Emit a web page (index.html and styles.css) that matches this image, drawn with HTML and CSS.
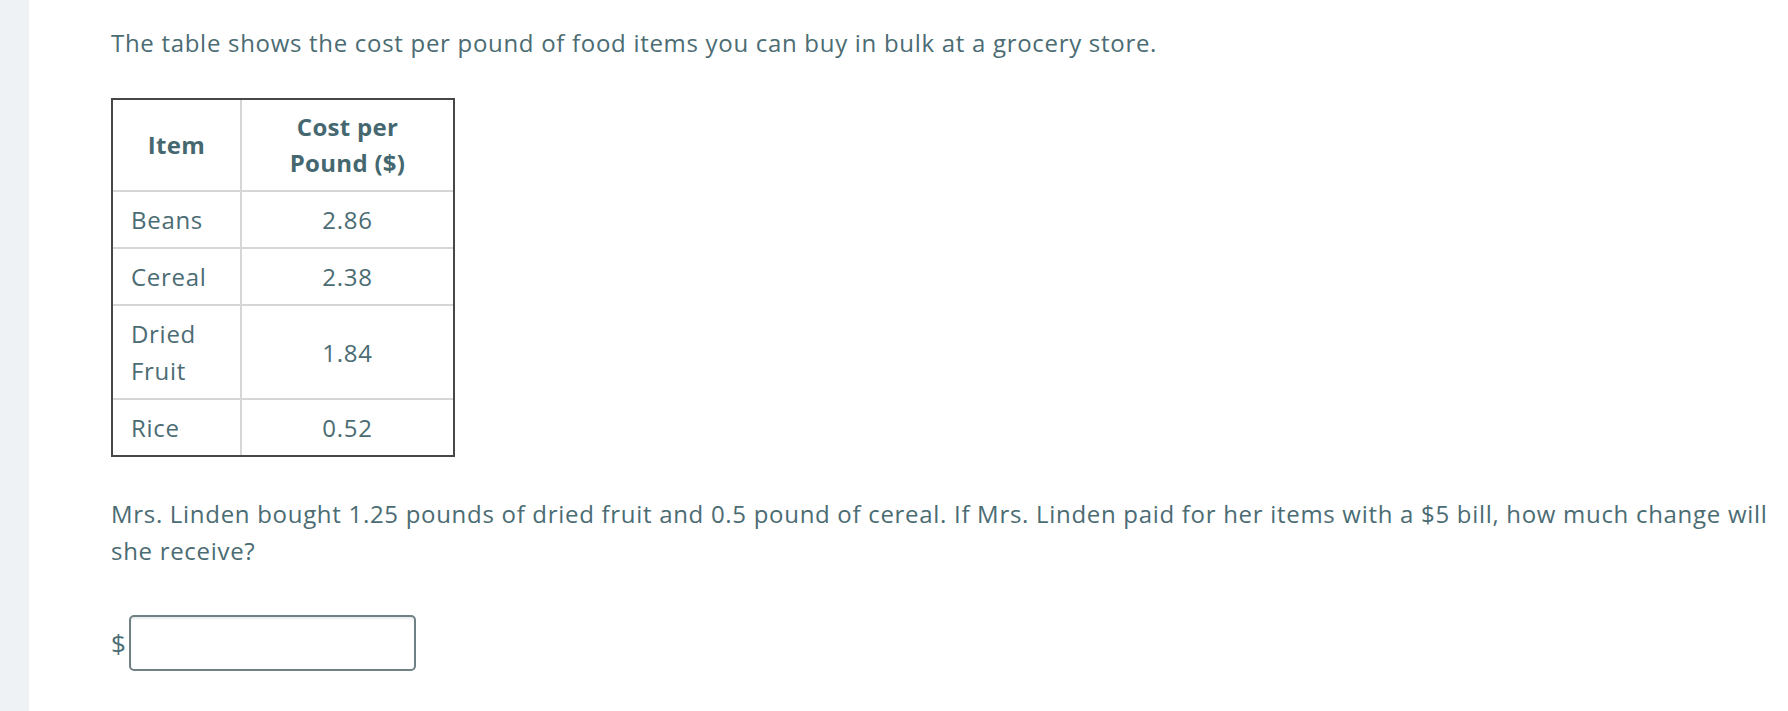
FILE: index.html
```html
<!DOCTYPE html>
<html lang="en">
<head>
<meta charset="utf-8">
<title>Grocery store question</title>
<link rel="stylesheet" href="styles.css">
</head>
<body>
<div class="page">
  <aside class="rail"></aside>
  <main class="content">
    <p class="intro">The table shows the cost per pound of food items you can buy in bulk at a grocery store.</p>
    <table class="costs">
      <thead>
        <tr>
          <th class="col-item">Item</th>
          <th class="col-cost">Cost per<br>Pound ($)</th>
        </tr>
      </thead>
      <tbody>
        <tr><td class="name">Beans</td><td class="num">2.86</td></tr>
        <tr><td class="name">Cereal</td><td class="num">2.38</td></tr>
        <tr><td class="name">Dried<br>Fruit</td><td class="num">1.84</td></tr>
        <tr><td class="name">Rice</td><td class="num">0.52</td></tr>
      </tbody>
    </table>
    <p class="question">Mrs. Linden bought 1.25 pounds of dried fruit and 0.5 pound of cereal. If Mrs. Linden paid for her items with a $5 bill, how much change will she receive?</p>
    <div class="answer">
      <span class="unit">$</span>
      <input class="field" type="text" aria-label="answer">
    </div>
  </main>
</div>
</body>
</html>
```

FILE: styles.css
```css
html, body {
  margin: 0;
  padding: 0;
  background: #ffffff;
}
body {
  font-family: "Open Sans", Lato, sans-serif;
  font-size: 24px;
  line-height: 37px;
  letter-spacing: 0.7px;
  color: #4b6c73;
}
.page {
  display: flex;
  min-height: 711px;
}
.rail {
  width: 29px;
  flex: 0 0 29px;
  background: #eef2f4;
}
.content {
  flex: 1;
  padding: 24px 18px 0 82px;
}
.intro {
  margin: 0 0 37px 0;
}
.costs {
  border-collapse: separate;
  border-spacing: 0;
  border: 2px solid #474747;
}
.costs th, .costs td {
  padding: 9px 18px;
  line-height: 37px;
  border-right: 2px solid #d6d6d6;
  border-bottom: 2px solid #d6d6d6;
}
.costs th:last-child, .costs td:last-child {
  border-right: 0;
}
.costs tbody tr:last-child td {
  border-bottom: 0;
}
.costs th {
  padding: 9px 18px 9px;
  line-height: 36px;
  font-weight: 700;
  letter-spacing: 0.3px;
  color: #456870;
  text-align: center;
}
.col-item { width: 91px; }
.col-cost { width: 175px; }
.costs td.name { text-align: left; font-weight: 400; }
.costs td.num { text-align: center; }
.question {
  margin: 38px 0 46px 0;
}
.answer {
  display: flex;
  align-items: center;
  gap: 3px;
}
.unit {
  font-size: 26px;
  line-height: 37px;
  letter-spacing: 0;
}
.field {
  width: 287px;
  height: 56px;
  box-sizing: border-box;
  border: 2px solid #6f8185;
  border-radius: 5px;
  box-shadow: inset 0 2px 2px rgba(0,0,0,0.08);
  background: #fff;
  font: inherit;
  padding: 0 10px;
  margin: 0;
}
```
